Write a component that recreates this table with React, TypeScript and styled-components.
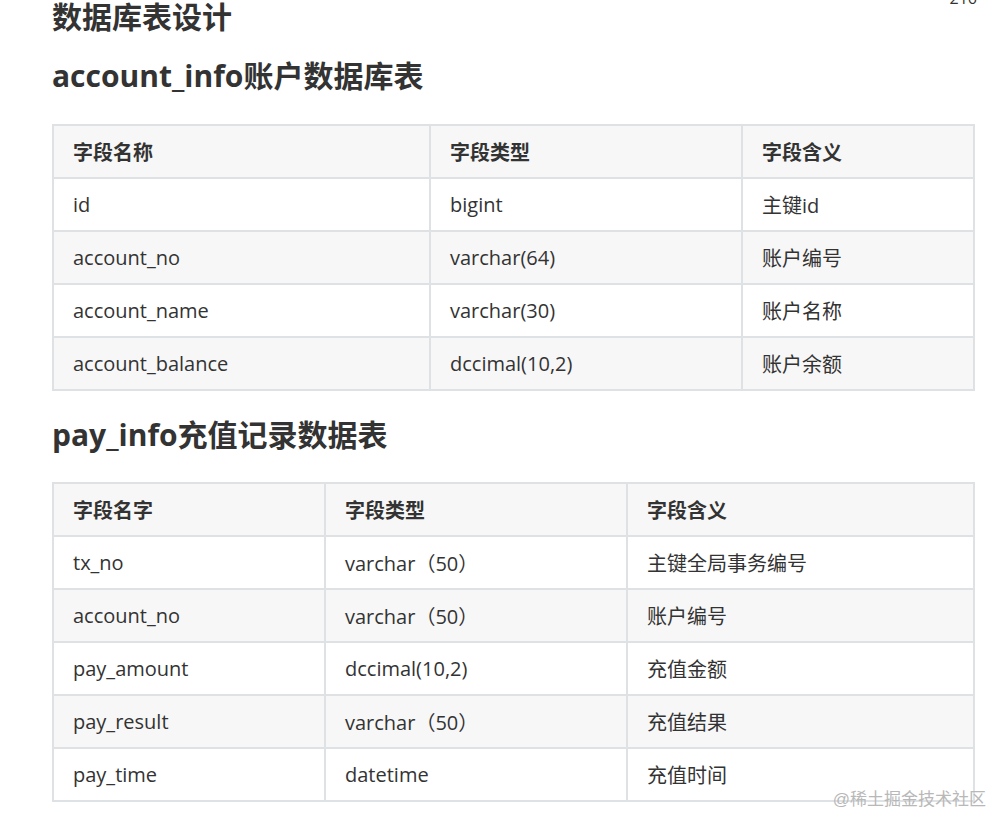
import React from "react";
import styled, { createGlobalStyle } from "styled-components";

const Global = createGlobalStyle`
  html, body { margin: 0; padding: 0; background: #fff; }
  body { font-family: "Open Sans", "Noto Sans CJK SC", sans-serif; color: #333; }
`;

const Page = styled.div`
  position: relative;
  width: 995px;
  height: 816px;
  overflow: hidden;
  padding: 0 22px 0 52px;
  box-sizing: border-box;
`;

const PageNo = styled.div`
  position: absolute;
  top: -13px;
  right: 18px;
  font-size: 16px;
  color: #333;
`;

const Title = styled.h2`
  margin: 0;
  font-size: 30px;
  line-height: 34px;
  font-weight: 700;
  color: #333;
`;

const Section = styled.h3<{ $top: number }>`
  margin: ${(p) => p.$top}px 0 0;
  font-size: 30px;
  line-height: 40px;
  font-weight: 700;
  color: #333;
`;

const Table = styled.table<{ $top: number }>`
  margin-top: ${(p) => p.$top}px;
  width: 921px;
  border-collapse: collapse;
  table-layout: fixed;
  font-size: 20px;
`;

const Row = styled.tr<{ $shade: boolean }>`
  background: ${(p) => (p.$shade ? "#f7f7f7" : "#fff")};
`;

const Cell = styled.td`
  border: 2px solid #dfe2e5;
  height: 53px;
  padding: 0 19px;
  box-sizing: border-box;
  text-align: left;
  vertical-align: middle;
  color: #333;
  white-space: nowrap;
`;

const Head = styled(Cell).attrs({ as: "th" })`
  font-weight: 700;
  font-size: 20px;
`;

const Watermark = styled.div`
  position: absolute;
  right: 9px;
  bottom: 6px;
  font-size: 17px;
  color: #b8b8b8;
  font-family: "Liberation Sans", "Noto Sans CJK SC", sans-serif;
`;

type TableData = { widths: number[]; head: string[]; rows: string[][] };

const t1: TableData = {
  widths: [377, 312, 232],
  head: ["字段名称", "字段类型", "字段含义"],
  rows: [
    ["id", "bigint", "主键id"],
    ["account_no", "varchar(64)", "账户编号"],
    ["account_name", "varchar(30)", "账户名称"],
    ["account_balance", "dccimal(10,2)", "账户余额"],
  ],
};

const t2: TableData = {
  widths: [272, 302, 347],
  head: ["字段名字", "字段类型", "字段含义"],
  rows: [
    ["tx_no", "varchar（50）", "主键全局事务编号"],
    ["account_no", "varchar（50）", "账户编号"],
    ["pay_amount", "dccimal(10,2)", "充值金额"],
    ["pay_result", "varchar（50）", "充值结果"],
    ["pay_time", "datetime", "充值时间"],
  ],
};

function DataTable({ data, top }: { data: TableData; top: number }) {
  return (
    <Table $top={top}>
      <colgroup>
        {data.widths.map((w, i) => (
          <col key={i} style={{ width: w }} />
        ))}
      </colgroup>
      <thead>
        <Row $shade={true}>
          {data.head.map((h) => (
            <Head key={h}>{h}</Head>
          ))}
        </Row>
      </thead>
      <tbody>
        {data.rows.map((r, i) => (
          <Row key={i} $shade={i % 2 === 1}>
            {r.map((c, j) => (
              <Cell key={j}>{c}</Cell>
            ))}
          </Row>
        ))}
      </tbody>
    </Table>
  );
}

export default function App() {
  return (
    <Page>
      <Global />
      <PageNo>216</PageNo>
      <Title>数据库表设计</Title>
      <Section $top={22}>account_info账户数据库表</Section>
      <DataTable data={t1} top={28} />
      <Section $top={24}>pay_info充值记录数据表</Section>
      <DataTable data={t2} top={27} />
      <Watermark>@稀土掘金技术社区</Watermark>
    </Page>
  );
}
